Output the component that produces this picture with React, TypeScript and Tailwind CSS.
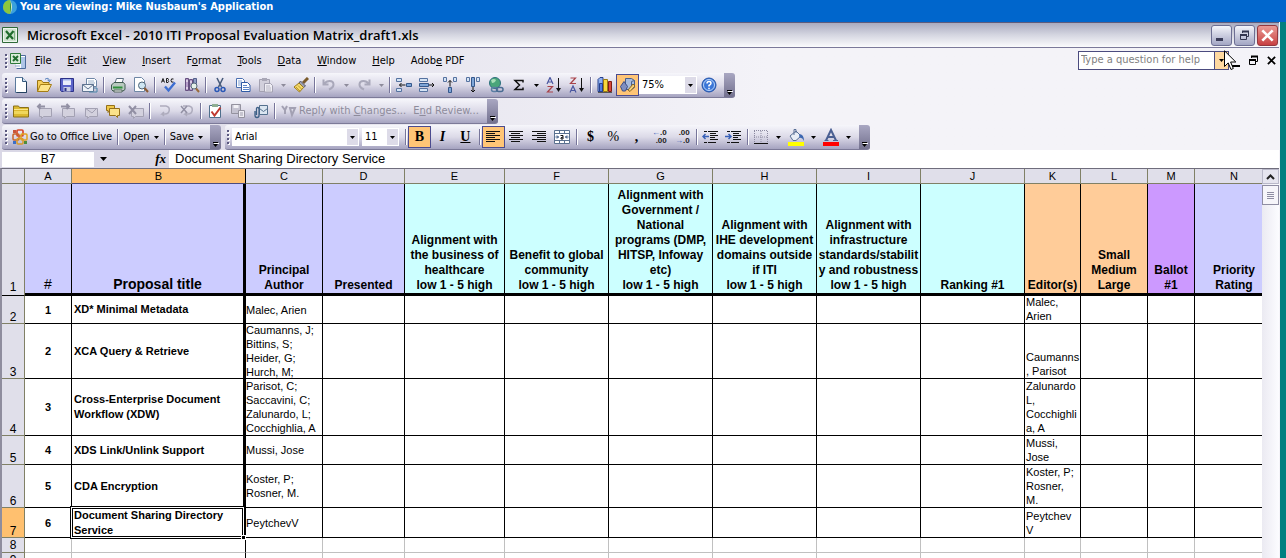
import React from "react";
import type { ReactNode } from "react";

const UI = "font-['DejaVu_Sans_Condensed','DejaVu_Sans',sans-serif]";

/* ---------- icon primitives ---------- */

function Svg({ children, w = 16, h = 16 }: { children: ReactNode; w?: number; h?: number }) {
  return (
    <svg width={w} height={h} viewBox={`0 0 ${w} ${h}`} fill="none" aria-hidden="true" className="shrink-0">
      {children}
    </svg>
  );
}

const page = (
  <>
    <path d="M2.5 .5h7l4 4v11h-11z" fill="#fff" stroke="#5b7a9c" />
    <path d="M9.5 .5v4h4" fill="#cfe0f2" stroke="#35587c" />
    <path d="M13.5 5v10.500h-10" stroke="#23405f" />
  </>
);

const NewIcon = () => <Svg>{page}</Svg>;
const OpenIcon = () => (
  <Svg>
    <path d="M1.500 14.500v-11h4l1.500 2h6v3" fill="#f6cf5c" stroke="#9a7411" />
    <path d="M1.500 14.500l3-7h11l-3.500 7z" fill="#fde48a" stroke="#a57d14" />
    <path d="M9 2.500c2-2 4-1 4.500 1m1.500-1l-1.500 2-2-1.500" stroke="#3f6fb3" />
  </Svg>
);
const SaveIcon = () => (
  <Svg>
    <path d="M1.500 1.500h13v13h-12l-1-1z" fill="#5a63c9" stroke="#2c3288" />
    <path d="M4 2h8v6H4z" fill="#e9edfb" />
    <path d="M4 2h8v1.500H4z" fill="#9fb0e8" />
    <path d="M4.500 10h7v4.500h-7z" fill="#c9cde3" />
    <path d="M5.500 11h2v3h-2z" fill="#2c3288" />
  </Svg>
);
const MailPrintIcon = () => (
  <Svg>
    <path d="M4.500 1.500h8l2 2v6h-10z" fill="#fff" stroke="#6f87a6" />
    <path d="M6 4h6M6 6h7" stroke="#9bb0c9" />
    <path d="M.5 7.500h11v7H.5z" fill="#eef2f8" stroke="#5f7390" />
    <path d="M.5 7.500L6 12l5.500-4.500" stroke="#5f7390" />
    <path d="M12 11h3v4h-8" stroke="#4b86a8" />
  </Svg>
);
const PrintIcon = () => (
  <Svg>
    <path d="M5 6l1.500-4.500h7L12 6z" fill="#fff" stroke="#5d6f83" />
    <path d="M1.500 8l2.500-2.500h9.500l1.500 2v5l-2 1.500H3l-1.500-1.500z" fill="#b8c9bf" stroke="#3f5a50" />
    <path d="M3 10.500h9.500" stroke="#2f8f3c" strokeWidth="2" />
    <path d="M4 13h8v2H4z" fill="#f3f6f4" stroke="#55675f" />
  </Svg>
);
const PreviewIcon = () => (
  <Svg>
    <path d="M1.500 .5h7l3 3v11h-10z" fill="#fff" stroke="#6e87a5" />
    <circle cx="9" cy="8.500" r="3.500" fill="#cfe6f2" stroke="#4d6377" />
    <path d="M11.500 11l3.500 4" stroke="#8a5a32" strokeWidth="2" />
  </Svg>
);
const SpellIcon = () => (
  <Svg>
    <path d="M.5 5.500l1.500-4 1.500 4M1 4h2M5.500 1.500v4h1.500q1.200-1 0-2 1-1 0-2zM12.500 2q-2.500-1-2.500 1.500t2.500 1.500" stroke="#1b1b1b" />
    <path d="M4 9.500l3.500 4L14 5.500" stroke="#3d6ed1" strokeWidth="2.400" />
  </Svg>
);
const ResearchIcon = () => (
  <Svg>
    <path d="M1.500 1.500h3v12h-3zM5.500 2.500h3v11h-3z" fill="#b59cc9" stroke="#665080" />
    <path d="M2 4h2M6 5h2M2 11h2M6 11h2" stroke="#fff" />
    <path d="M9.500 1.500h3v5h-3z" fill="#8f9bc2" stroke="#555f8a" />
    <circle cx="10" cy="9" r="3" fill="#e5f1e8" stroke="#56697a" />
    <path d="M12 11.500l3 3.500" stroke="#9a6a3a" strokeWidth="2" />
  </Svg>
);
const CutIcon = () => (
  <Svg>
    <path d="M5 1l4.500 9M11 1L6.500 10" stroke="#4a5d7c" strokeWidth="1.600" />
    <circle cx="5" cy="12.500" r="2" stroke="#2b58b5" strokeWidth="1.500" />
    <circle cx="11" cy="12.500" r="2" stroke="#2b58b5" strokeWidth="1.500" />
  </Svg>
);
const CopyIcon = () => (
  <Svg>
    <path d="M1.500 1.500h6l2 2v7h-8z" fill="#fff" stroke="#4a6fb0" />
    <path d="M3 4h4M3 6h5M3 8h5" stroke="#7f9fd4" />
    <path d="M6.500 5.500h6l2.500 2.500v6.500H6.500z" fill="#fff" stroke="#2f5aa5" />
    <path d="M8 8.500h4M8 10.500h6M8 12.500h6" stroke="#5b84c8" />
  </Svg>
);
const PasteIcon = () => (
  <Svg>
    <path d="M1.500 2.500h10v12h-10z" fill="#d2d0dc" stroke="#a3a1b1" />
    <path d="M4 1h5v3H4z" fill="#a9a7b6" />
    <path d="M6.500 6.500h6l2 2v6.500h-8z" fill="#efeef4" stroke="#a3a1b1" />
    <path d="M8 9h4M8 11h5M8 13h5" stroke="#b8b6c4" />
  </Svg>
);
const PainterIcon = () => (
  <Svg>
    <path d="M15 1l-5 5" stroke="#7a5a2a" strokeWidth="3" />
    <path d="M7.500 4l5 5-2 1.500-4.500-4.500z" fill="#9fa1ae" stroke="#55576a" />
    <path d="M6 6l4.500 4.500L6.500 15 1 10z" fill="#f5da6a" stroke="#9b7a1c" />
    <path d="M3 10l4 4M5 8.500l3.500 3.500" stroke="#c19a2a" />
  </Svg>
);
const UndoIcon = () => (
  <Svg>
    <path d="M2.500 2.500v5h5M3 7c3-4 9-4 9.500 0 .3 3-2 4.500-4.500 5.500" stroke="#a9a8ba" strokeWidth="2" />
  </Svg>
);
const RedoIcon = () => (
  <Svg>
    <path d="M13.500 2.500v5h-5M13 7c-3-4-9-4-9.500 0-.3 3 2 4.500 4.500 5.500" stroke="#a9a8ba" strokeWidth="2" />
  </Svg>
);
const box = { fill: "#d5e4f5", stroke: "#5572a0" };
const InsertRowIcon = () => (
  <Svg>
    <path d="M.5 1.500h5v3h-5zM.5 11.500h5v3h-5z" {...box} />
    <path d="M10.500 6.500h5v3h-5z" fill="#7fa6d8" stroke="#35588c" />
    <path d="M9.500 8h-6m2-2l-2 2 2 2" stroke="#111" />
  </Svg>
);
const DeleteRowIcon = () => (
  <Svg>
    <path d="M.5 1.500h8v3h-8zM.5 11.500h8v3h-8z" {...box} />
    <path d="M.5 6.500h9v3h-9z" fill="#7fa6d8" stroke="#35588c" />
    <path d="M10 8h5m-2-2l2 2-2 2" stroke="#111" />
  </Svg>
);
const InsertColIcon = () => (
  <Svg>
    <path d="M1.500 .5h3v4h-3zM11.500 .5h3v4h-3z" {...box} />
    <path d="M6.500 10.500h3v5h-3z" fill="#7fa6d8" stroke="#35588c" />
    <path d="M8 9.500v-6m-2 2l2-2 2 2" stroke="#111" />
  </Svg>
);
const DeleteColIcon = () => (
  <Svg>
    <path d="M1.500 .5h3v4h-3zM11.500 .5h3v4h-3z" {...box} />
    <path d="M6.500 .5h3v9h-3z" fill="#7fa6d8" stroke="#35588c" />
    <path d="M8 10v5m-2-2l2 2 2-2" stroke="#111" />
  </Svg>
);
const LinkIcon = () => (
  <Svg>
    <circle cx="7" cy="6" r="5.500" fill="#4aa57a" stroke="#2b6f7d" />
    <path d="M3 3q3-2 5 0-1 3-4 3z" fill="#a9dfb8" />
    <rect x="3.500" y="10.500" width="6" height="4" rx="2" stroke="#5b7ea3" strokeWidth="1.500" />
    <rect x="8.500" y="10.500" width="6.500" height="4" rx="2" stroke="#4a6c92" strokeWidth="1.500" />
  </Svg>
);
const SigmaIcon = () => (
  <Svg>
    <path d="M12 5.500V3.500H4l4.500 4.500L4 12.500h8v-2" stroke="#111" strokeWidth="1.500" />
  </Svg>
);
const SortIcon = ({ desc = false }: { desc?: boolean }) => {
  const a = "M1 7L4 .5 7 7M2 5h4";
  const z = "M1.500 1h5l-5 5.500h5.500";
  return (
    <Svg>
      <path d={desc ? z : a} stroke={desc ? "#a8434a" : "#4a57a0"} strokeWidth="1.200" />
      <g transform="translate(0 8.500)">
        <path d={desc ? a : z} stroke={desc ? "#4a57a0" : "#a8434a"} strokeWidth="1.200" />
      </g>
      <path d="M12.500 1v12" stroke="#111" />
      <path d="M10 11h5l-2.500 4z" fill="#111" />
    </Svg>
  );
};
const ChartIcon = () => (
  <Svg>
    <path d="M1 2.500l2-2h3v14H1z" fill="#8fb0ee" stroke="#27408d" />
    <path d="M2.500 6.500h3v8h-3z" fill="#4f7ce0" stroke="#27408d" />
    <path d="M6.500 2.500h4v12h-4z" fill="#f7d83b" stroke="#9a7a10" />
    <path d="M11.500 4.500h3v10h-3z" fill="#d94a3a" stroke="#7f1c14" />
    <path d="M1 15.500h14" stroke="#555" />
  </Svg>
);
const DrawingIcon = () => (
  <Svg>
    <path d="M5.500 1.500h6l3 2v7l-3 2h-6z" fill="#a7bbdc" stroke="#49608d" />
    <path d="M11.500 4.500l3-1M11.500 4.500v8" stroke="#49608d" />
    <path d="M.5 9.500l3.500-5 3.500 5-2 4.500H2.500z" fill="#7f8fc0" stroke="#3c4d86" />
    <path d="M8 13l5-6 2 2-5 5.500z" fill="#f3d07a" stroke="#8b6620" />
  </Svg>
);
const HelpIcon = () => (
  <Svg>
    <circle cx="8" cy="8" r="7" fill="#3a76d8" stroke="#2353a8" />
    <circle cx="8" cy="8" r="5.500" stroke="#b9d3f7" />
    <path d="M6 6.500q0-2 2-2t2 1.700q0 1.300-2 2.300v1M8 10.800v1.400" stroke="#fff" strokeWidth="1.500" />
  </Svg>
);
const FolderNoteIcon = () => (
  <Svg>
    <path d="M.5 14v-11h5l1 1.500h9v9.500z" fill="#dcb930" stroke="#8a7119" />
    <path d="M1 6.500h14" stroke="#f8e690" />
    <path d="M1 8h14v3H1z" fill="#f0d75c" />
  </Svg>
);
const NoteIcon = ({ dir = 0 }: { dir?: number }) => (
  <Svg>
    <path d="M3.500 5.500h12v8h-8l-2 2v-2h-2z" fill="#d3d1de" stroke="#a3a1b3" />
    {dir === 0 && <path d="M9 3.500H2m2.500-2.500L2 3.500 4.500 6" stroke="#9290a4" strokeWidth="2" />}
    {dir === 1 && <path d="M2 3.500h8M7.500 1L10 3.500 7.500 6" stroke="#9290a4" strokeWidth="2" />}
    {dir === 2 && <path d="M3 5l7 5 5-5" stroke="#a3a1b3" />}
    {dir === 3 && <path d="M1 3l7 8M8 3l-7 8" stroke="#9290a4" strokeWidth="2" />}
  </Svg>
);
const NotesIcon = () => (
  <Svg>
    <path d="M1.500 2.500h8v5h-5l-1.500 2v-2h-1.500z" fill="#f0c94a" stroke="#94701a" />
    <path d="M4.500 5.500h10v7h-2v2l-2-2h-6z" fill="#fbe28a" stroke="#94701a" />
  </Svg>
);
const InkIcon = ({ cross = false }: { cross?: boolean }) => (
  <Svg>
    <path d="M4 3h6c5 1 4 8-1 8H6l2-2M6 11l2 2" stroke="#aeacbd" strokeWidth="1.500" />
    {cross && <path d="M2 3l6 7M8 3l-6 7" stroke="#9290a4" strokeWidth="1.500" />}
  </Svg>
);
const TaskIcon = () => (
  <Svg>
    <path d="M2.500 2.500h11v12h-11z" fill="#fff" stroke="#4f6f8c" />
    <path d="M5 1h6v3H5z" fill="#8fae93" />
    <path d="M4.500 8.500l3 4 6-8" stroke="#c0392f" strokeWidth="2" />
  </Svg>
);
const UpdateIcon = () => (
  <Svg>
    <path d="M1.500 1.500h9v9h-9z" fill="#c5c3d1" stroke="#94929f" />
    <path d="M3.500 2h5v3h-5z" fill="#f2f1f6" />
    <path d="M8.500 7.500h6v7h-6z" fill="#eeedf3" stroke="#94929f" />
    <path d="M10 10h3M10 12h3" stroke="#9f9dac" />
  </Svg>
);
const AttachIcon = () => (
  <Svg>
    <path d="M6.500 2.500h8v9h-8z" fill="#dbe6f1" stroke="#54708e" />
    <path d="M6.500 5.500l4 3 4-3" stroke="#54708e" />
    <path d="M2 8v4.500q0 2 2 2t2-2V6q0-1.500-1.300-1.500T3.500 6v6" stroke="#3c5f86" strokeWidth="1.300" />
  </Svg>
);
const ReplyIcon = () => (
  <Svg>
    <path d="M1 3l3 4 2-4M4 7v4M9 5h5l-3 7z" stroke="#a3a1b3" strokeWidth="2" />
  </Svg>
);
const OfficeIcon = () => (
  <Svg>
    <rect x="5" y="1" width="6" height="6" rx="1" stroke="#d8482c" strokeWidth="1.700" />
    <rect x="1" y="5" width="6" height="6" rx="1" stroke="#c8642a" strokeWidth="1.500" />
    <rect x="9" y="5" width="6" height="6" rx="1" stroke="#e0a320" strokeWidth="1.500" />
    <rect x="5" y="9.500" width="6" height="5.500" rx="1" stroke="#d99a2a" strokeWidth="1.500" />
    <path d="M1 1h3v3H1z" fill="#c9563a" />
    <path d="M12 12h3v3h-3z" fill="#4c8d3f" />
    <path d="M1 12h3v3H1z" fill="#3b6fc9" />
  </Svg>
);
const AlignIcon = ({ kind }: { kind: "l" | "c" | "r" }) => (
  <Svg>
    {[2.5, 4.5, 6.5, 8.5, 10.5, 12.5].map((y, i) => {
      const w = i % 2 ? 9 : 14;
      const x = kind === "l" ? 1 : kind === "r" ? 15 - w : 1 + (14 - w) / 2;
      return <path key={y} d={`M${Math.floor(x)} ${y}h${w}`} stroke="#111" />;
    })}
  </Svg>
);
const MergeIcon = () => (
  <Svg>
    <path d="M.5 1.500h15v13H.5zM.5 4.500h15M.5 11.500h15M5.500 1.500v3M10.500 1.500v3M5.500 11.500v3M10.500 11.500v3" fill="#fff" stroke="#5a718f" />
    <path d="M1.500 8h3m-1.500-1.500L4.500 8 3 9.500M14.500 8h-3M13 6.500L11.500 8 13 9.500" stroke="#2c4a78" />
    <path d="M6.500 6.500h2.500v3.500H7q-1-1.500 2-2" stroke="#111" />
  </Svg>
);
const IndentIcon = ({ out = false }: { out?: boolean }) => (
  <Svg>
    <path d="M6 2.500h10M8 4.500h6M8 6.500h8M8 8.500h5M8 10.500h8M6 13.500h8M2 2.500h3M2 13.500h3" stroke="#111" />
    <path d={out ? "M7 7.500H1m2.500-2.500L1 7.500 3.500 10" : "M0 7.500h6M3.500 5L6 7.500 3.500 10"} stroke="#3a62b8" strokeWidth="1.500" />
  </Svg>
);
const BordersIcon = () => (
  <Svg>
    <path d="M1.500 2v12M8 2v12M14.500 2v12M1 1.500h14M1 8h14" stroke="#8c8aa0" strokeDasharray="1 1" />
    <path d="M1 14.500h14" stroke="#111" />
  </Svg>
);
const FillIcon = () => (
  <Svg w={18} h={18}>
    <path d="M3 8l6-5 5 5-5 4.500H6z" fill="#e8edf6" stroke="#586f95" />
    <path d="M7 7V1.500h2V5" stroke="#586f95" />
    <path d="M12 6q5 0 5 7-2-4-4.500-3z" fill="#3d67b1" />
    <path d="M1 14h16v4H1z" fill="#ff0" />
  </Svg>
);
const FontColorIcon = () => (
  <Svg w={18} h={18}>
    <path d="M4 12.500L9 2l5 10.500M6 9h6" stroke="#4a5f92" strokeWidth="2" />
    <path d="M2.500 12.500h4M11 12.500h5" stroke="#4a5f92" />
    <path d="M1 14h16v4H1z" fill="#f00" />
  </Svg>
);
const ExcelIcon = () => (
  <Svg w={18} h={18}>
    <path d="M1.500 1.500h15v15h-15z" fill="#eef5ee" stroke="#2f6b38" />
    <path d="M3 3h12v12H3z" fill="#cfe3cf" />
    <path d="M5 5l7 8M12.500 5l-7 8" stroke="#1f6b2c" strokeWidth="2.200" />
    <path d="M13.500 5v9" stroke="#7fae84" />
  </Svg>
);
const WorkbookIcon = () => (
  <Svg w={18} h={18}>
    <path d="M5.500 3.500h11v13h-9" fill="#fff" stroke="#4b6a9c" />
    <path d="M13 5v11M15 5v11" stroke="#5f8cd0" />
    <path d="M1.500 1.500h10v10h-10z" fill="#d9ecd9" stroke="#2f7a3a" />
    <path d="M4 4l5 5M9 4L4 9" stroke="#1f6b2c" strokeWidth="2" />
    <path d="M6 14h5" stroke="#8fa6c9" />
  </Svg>
);

/* ---------- toolbar parts ---------- */

const Tri = ({ dim = false }: { dim?: boolean }) => (
  <svg width="5" height="3" viewBox="0 0 5 3" aria-hidden="true">
    <path d="M0 0h5L2.500 3z" fill={dim ? "#8d8b9b" : "#000"} />
  </svg>
);

function Tool({ label, active = false, children }: { label: string; active?: boolean; children: ReactNode }) {
  return (
    <button
      type="button"
      aria-label={label}
      className={
        active
          ? "flex h-[22px] w-[23px] shrink-0 items-center justify-center border border-[#4b4b8f] bg-[#ffc576]"
          : "flex h-[22px] w-[23px] shrink-0 items-center justify-center"
      }
    >
      {children}
    </button>
  );
}

const Drop = ({ label, dim = false }: { label: string; dim?: boolean }) => (
  <button type="button" aria-label={label} className="flex h-[22px] w-3 shrink-0 items-center justify-center">
    <Tri dim={dim} />
  </button>
);

const Sep = () => <span className="mx-[2px] h-4 w-px shrink-0 bg-[#77759a] shadow-[1px_0_0_#fff]" />;

const Grip = () => (
  <span className="flex w-[7px] shrink-0 flex-col items-center gap-[2px]">
    {[0, 1, 2, 3].map((i) => (
      <span key={i} className="size-[2px] bg-[#5b5980] shadow-[1px_1px_0_#fff]" />
    ))}
  </span>
);

function Bar({ label, children }: { label: string; children: ReactNode }) {
  return (
    <div
      role="toolbar"
      aria-label={label}
      className="flex h-[25px] shrink-0 items-center overflow-hidden rounded-[3px] border-b border-[#7c7a98] bg-linear-to-b from-[#f6f6fb] via-[#dcdae8] to-[#a5a3c0]"
    >
      <Grip />
      {children}
      <button
        type="button"
        aria-label={`${label} options`}
        className="ml-1 flex h-full w-[11px] shrink-0 flex-col items-center justify-end gap-px bg-linear-to-b from-[#a9a7c2] to-[#74728f] pb-[2px]"
      >
        <span className="h-px w-[5px] bg-black shadow-[1px_1px_0_#fff]" />
        <Tri />
      </button>
    </div>
  );
}

function Combo({ label, value, size }: { label: string; value: string; size: string }) {
  return (
    <span className={`relative flex h-[18px] shrink-0 bg-white ${size}`}>
      <select aria-label={label} className="w-full appearance-none bg-transparent pl-[3px] text-[11px] leading-[18px] outline-none">
        <option>{value}</option>
      </select>
      <span className="pointer-events-none absolute inset-y-px right-px flex w-[11px] items-center justify-center bg-[#dddbe8]">
        <Tri />
      </span>
    </span>
  );
}

const Glyph = ({ children }: { children: ReactNode }) => (
  <span className="font-['Liberation_Serif',serif] text-[14px] leading-none font-bold">{children}</span>
);

const Decimal = ({ more = false }: { more?: boolean }) => (
  <span className="flex flex-col font-['Liberation_Sans',sans-serif] text-[8px] leading-[8px] font-bold text-[#222]">
    <span className="text-right">
      {more && <span className="text-[#3a62b8]">←</span>}
      {more ? ".0" : ".00"}
    </span>
    <span className="text-right">
      {!more && <span className="text-[#3a62b8]">→</span>}
      {more ? ".00" : ".0"}
    </span>
  </span>
);

/* ---------- sheet data ---------- */

const columns = [
  { id: "A", w: "w-[47px]", bg: "bg-[#ccccff]", title: ["#"], big: "text-[14px] font-normal" },
  { id: "B", w: "w-[174px]", bg: "bg-[#ccccff]", title: ["Proposal title"], big: "text-[14px] font-bold" },
  { id: "C", w: "w-[77px]", bg: "bg-[#ccccff]", title: ["Principal", "Author"] },
  { id: "D", w: "w-[82px]", bg: "bg-[#ccccff]", title: ["Presented"] },
  { id: "E", w: "w-[100px]", bg: "bg-[#ccffff]", title: ["Alignment with", "the business of", "healthcare", "low 1 - 5 high"] },
  { id: "F", w: "w-[104px]", bg: "bg-[#ccffff]", title: ["Benefit to global", "community", "low 1 - 5 high"] },
  {
    id: "G",
    w: "w-[104px]",
    bg: "bg-[#ccffff]",
    title: ["Alignment with", "Government /", "National", "programs (DMP,", "HITSP, Infoway", "etc)", "low 1 - 5 high"],
  },
  { id: "H", w: "w-[104px]", bg: "bg-[#ccffff]", title: ["Alignment with", "IHE development", "domains outside", "if ITI", "low 1 - 5 high"] },
  { id: "I", w: "w-[104px]", bg: "bg-[#ccffff]", title: ["Alignment with", "infrastructure", "standards/stabilit", "y and robustness", "low 1 - 5 high"] },
  { id: "J", w: "w-[104px]", bg: "bg-[#ccffff]", title: ["Ranking #1"] },
  { id: "K", w: "w-[56px]", bg: "bg-[#ffcc99]", title: ["Editor(s)"] },
  { id: "L", w: "w-[67px]", bg: "bg-[#ffcc99]", title: ["Small", "Medium", "Large"] },
  { id: "M", w: "w-[47px]", bg: "bg-[#cc99ff]", title: ["Ballot", "#1"] },
  { id: "N", w: "", bg: "bg-[#ccccff]", title: ["Priority", "Rating"] },
];

const rows = [
  { n: 2, h: "h-[27px]", title: ["XD* Minimal Metadata"], author: ["Malec, Arien"], editor: ["Malec,", "Arien"] },
  { n: 3, h: "h-[54px]", title: ["XCA Query & Retrieve"], author: ["Caumanns, J;", "Bittins, S;", "Heider, G;", "Hurch, M;"], editor: ["Caumanns", ", Parisot"] },
  {
    n: 4,
    h: "h-[56px]",
    title: ["Cross-Enterprise Document", "Workflow (XDW)"],
    author: ["Parisot, C;", "Saccavini, C;", "Zalunardo, L;", "Cocchighlia, A"],
    editor: ["Zalunardo", "L,", "Cocchighli", "a, A"],
  },
  { n: 5, h: "h-[28px]", title: ["XDS Link/Unlink Support"], author: ["Mussi, Jose"], editor: ["Mussi,", "Jose"] },
  { n: 6, h: "h-[42px]", title: ["CDA Encryption"], author: ["Koster, P;", "Rosner, M."], editor: ["Koster, P;", "Rosner,", "M."] },
  { n: 7, h: "h-[29px]", title: ["Document Sharing Directory", "Service"], author: ["PeytchevV"], editor: ["Peytchev", "V"] },
];

const Lines = ({ text }: { text: string[] }) => (
  <div className="whitespace-nowrap">
    {text.map((t) => (
      <div key={t}>{t}</div>
    ))}
  </div>
);

function Sheet() {
  return (
    <table className="w-full min-w-[1272px] table-fixed border-separate border-spacing-0 bg-white font-['Liberation_Sans',Arial,sans-serif] text-[11px] leading-[14px] text-black">
      <colgroup>
        <col className="w-[23px]" />
        {columns.map((c) => (
          <col key={c.id} className={c.w} />
        ))}
      </colgroup>
      <thead>
        <tr>
          <th aria-label="Select all" className="border-r border-b border-[#808066] bg-[#e0dfea] p-0" />
          {columns.map((c) => (
            <th
              key={c.id}
              scope="col"
              className={
                c.id === "B"
                  ? "border-r border-b border-r-black border-b-[#4b4b7f] bg-[#ffc06f] p-0 font-normal"
                  : "border-r border-b border-[#808066] bg-[#e0dfea] p-0 font-normal"
              }
            >
              {c.id}
            </th>
          ))}
        </tr>
      </thead>
      <tbody>
        <tr>
          <th scope="row" className="border-r border-b border-r-[#808066] border-b-black bg-[#e0dfea] p-0 align-bottom text-[12px] leading-[15px] font-normal">
            1
          </th>
          {columns.map((c) => (
            <td
              key={c.id}
              className={`border-b-3 border-black p-0 align-bottom text-center ${c.id === "B" ? "border-r-3" : "border-r"} ${c.bg} ${c.big ?? "text-[12px] font-bold"}`}
            >
              <div className={`flex h-[109px] items-end justify-center overflow-hidden ${c.big ? "leading-[17px]" : "leading-[15px]"}`}>
                <Lines text={c.title} />
              </div>
            </td>
          ))}
        </tr>
        {rows.map((r, i) => (
          <tr key={r.n}>
            <th
              scope="row"
              className={`border-r border-b border-[#808066] p-0 align-bottom text-[12px] leading-[12px] font-normal ${r.n === 7 ? "bg-[#ffc06f]" : "bg-[#e0dfea]"}`}
            >
              {r.n}
            </th>
            {columns.map((c) => (
              <td key={c.id} className={`relative border-b border-black p-0 ${c.id === "B" ? "border-r-3" : "border-r"}`}>
                {c.id === "A" && <div className={`flex items-center justify-center font-bold ${r.h}`}>{i + 1}</div>}
                {c.id === "B" && (
                  <div className={`flex items-center overflow-hidden pl-[2px] leading-[15px] font-bold ${r.h}`}>
                    <Lines text={r.title} />
                  </div>
                )}
                {c.id === "C" && (
                  <div className={`flex items-center overflow-hidden ${r.h}`}>
                    <Lines text={r.author} />
                  </div>
                )}
                {c.id === "K" && (
                  <div className={`flex items-end overflow-hidden pl-[1px] ${r.h}`}>
                    <Lines text={r.editor} />
                  </div>
                )}
                {c.id === "B" && r.n === 7 && (
                  <>
                    <span className="absolute -inset-x-[2px] -inset-y-[2px] border border-black outline outline-offset-[-2px] outline-white" />
                    <span className="absolute inset-0 border border-black" />
                    <span className="absolute -right-[3px] -bottom-[3px] size-[5px] border border-white bg-black" />
                  </>
                )}
              </td>
            ))}
          </tr>
        ))}
        {[8, 9].map((n) => (
          <tr key={n}>
            <th scope="row" className="border-r border-b border-[#808066] bg-[#e0dfea] p-0 text-[12px] leading-[14px] font-normal">
              {n}
            </th>
            {columns.map((c) => (
              <td key={c.id} className={`border-r border-b border-b-[#c0c0c0] p-0 ${c.id === "B" ? "border-r-black" : "border-r-[#c0c0c0]"}`} />
            ))}
          </tr>
        ))}
      </tbody>
    </table>
  );
}

/* ---------- window ---------- */

const menus = ["File", "Edit", "View", "Insert", "Format", "Tools", "Data", "Window", "Help", "Adobe PDF"];
const hot: Record<string, number> = { Format: 1, "Adobe PDF": 4 };

const Mnemonic = ({ text, at = 0 }: { text: string; at?: number }) => (
  <>
    {text.slice(0, at)}
    <span className="underline underline-offset-1">{text[at]}</span>
    {text.slice(at + 1)}
  </>
);

const RestoreGlyph = ({ color }: { color: string }) => (
  <svg width="11" height="11" viewBox="0 0 11 11" fill="none" aria-hidden="true">
    <path d="M3.500 3V1.500h6v5H8" stroke={color} />
    <path d="M3 1.500h7" stroke={color} strokeWidth="2" />
    <path d="M1.500 5h6v4.500h-6z" stroke={color} />
    <path d="M1 5h7" stroke={color} strokeWidth="2" />
  </svg>
);
const CloseGlyph = ({ color, s }: { color: string; s: number }) => (
  <svg width={s} height={s} viewBox="0 0 10 10" fill="none" aria-hidden="true">
    <path d="M1 1l8 8M9 1L1 9" stroke={color} strokeWidth="2" />
  </svg>
);

export default function App() {
  return (
    <div className={`flex h-screen flex-col overflow-hidden bg-[#008080] text-[11px] text-black ${UI}`}>
      <header className="flex h-[22px] shrink-0 items-start bg-[#0066cc] pl-[3px] text-white">
        <svg width="15" height="15" viewBox="0 0 15 15" aria-hidden="true">
          <circle cx="7" cy="7" r="7" fill="#3aa0dc" />
          <path d="M7 0a7 7 0 0 0 0 14z" fill="#8cc63f" />
          <path d="M7 0q4 7 0 14" fill="#d9f0c0" />
          <path d="M7 0q2 7 0 14" fill="#2f8a3a" />
        </svg>
        <h1 className="pl-[2px] text-[11px] leading-[14px] font-bold">You are viewing: Mike Nusbaum's Application</h1>
      </header>

      <div className="relative mr-[6px] flex min-h-0 flex-1 flex-col border-r border-[#f4f3f8] bg-[#f4f3f8]">
        <div className="flex h-[26px] shrink-0 items-center gap-2 border-t border-b border-t-[#5d5b7c] border-b-[#7b799a] bg-linear-to-b from-[#a9abbf] via-[#d5d6e1] to-[#fbfbfd] pr-px pl-px">
          <ExcelIcon />
          <h2 className="flex-1 truncate font-['Open_Sans','Noto_Sans',sans-serif] text-[13px] leading-[22px] font-semibold">
            Microsoft Excel - 2010 ITI Proposal Evaluation Matrix_draft1.xls
          </h2>
          <div className="flex gap-[2px]">
            <button type="button" aria-label="Minimize" className="flex size-[21px] items-end justify-start rounded-[3px] border border-[#6d6f93] bg-linear-to-b from-[#f4f5fa] to-[#a3a6c4] p-1">
              <span className="h-[3px] w-[7px] bg-[#3a3c58]" />
            </button>
            <button type="button" aria-label="Restore" className="flex size-[21px] items-center justify-center rounded-[3px] border border-[#6d6f93] bg-linear-to-b from-[#f4f5fa] to-[#a3a6c4]">
              <RestoreGlyph color="#33354f" />
            </button>
            <button type="button" aria-label="Close" className="flex size-[21px] items-center justify-center rounded-[3px] border border-[#93383f] bg-linear-to-b from-[#e99a96] to-[#c73e42]">
              <CloseGlyph color="#fff" s={13} />
            </button>
          </div>
        </div>

        <div className="shrink-0 bg-linear-to-r from-[#dad8e6] to-[#f4f3f8] to-60%">
          <div className="flex h-[25px] items-center pl-[2px]">
            <Grip />
            <WorkbookIcon />
            <nav aria-label="Menu" className="flex flex-1">
              {menus.map((m) => (
                <button key={m} type="button" className="px-2 leading-[22px]">
                  <Mnemonic text={m} at={hot[m] ?? 0} />
                </button>
              ))}
            </nav>
            <div className="flex h-[19px] w-[151px] border border-[#4b4b7f] bg-white">
              <input
                aria-label="Type a question for help"
                placeholder="Type a question for help"
                className="min-w-0 flex-1 pl-[2px] outline-none placeholder:text-[#7f7f7f]"
              />
              <button type="button" aria-label="Recent questions" className="flex w-[14px] items-center justify-center border-l border-[#4b4b7f] bg-[#ffd9a0]">
                <Tri />
              </button>
            </div>
            <div className="flex items-center gap-2 pr-[3px] pl-[3px]">
              <button type="button" aria-label="Minimize workbook" className="flex h-3 w-2 items-end">
                <span className="h-[2px] w-2 bg-black" />
              </button>
              <button type="button" aria-label="Restore workbook">
                <RestoreGlyph color="#000" />
              </button>
              <button type="button" aria-label="Close workbook">
                <CloseGlyph color="#000" s={9} />
              </button>
            </div>
          </div>

          <div className="flex flex-col items-start gap-px pl-[2px]">
            <Bar label="Standard">
              <Tool label="New"><NewIcon /></Tool>
              <Tool label="Open"><OpenIcon /></Tool>
              <Tool label="Save"><SaveIcon /></Tool>
              <Tool label="Permission"><MailPrintIcon /></Tool>
              <Sep />
              <Tool label="Print"><PrintIcon /></Tool>
              <Tool label="Print preview"><PreviewIcon /></Tool>
              <Sep />
              <Tool label="Spelling"><SpellIcon /></Tool>
              <Tool label="Research"><ResearchIcon /></Tool>
              <Sep />
              <Tool label="Cut"><CutIcon /></Tool>
              <Tool label="Copy"><CopyIcon /></Tool>
              <Tool label="Paste"><PasteIcon /></Tool>
              <Drop label="Paste options" dim />
              <Tool label="Format painter"><PainterIcon /></Tool>
              <Sep />
              <Tool label="Undo"><UndoIcon /></Tool>
              <Drop label="Undo list" dim />
              <Tool label="Redo"><RedoIcon /></Tool>
              <Drop label="Redo list" dim />
              <Sep />
              <Tool label="Insert rows"><InsertRowIcon /></Tool>
              <Tool label="Delete rows"><DeleteRowIcon /></Tool>
              <Tool label="Insert columns"><InsertColIcon /></Tool>
              <Tool label="Delete columns"><DeleteColIcon /></Tool>
              <Tool label="Hyperlink"><LinkIcon /></Tool>
              <Tool label="AutoSum"><SigmaIcon /></Tool>
              <Drop label="AutoSum list" />
              <Tool label="Sort ascending"><SortIcon /></Tool>
              <Tool label="Sort descending"><SortIcon desc /></Tool>
              <Sep />
              <Tool label="Chart"><ChartIcon /></Tool>
              <Tool label="Drawing" active><DrawingIcon /></Tool>
              <Combo label="Zoom" value="75%" size="w-[58px]" />
              <Tool label="Help"><HelpIcon /></Tool>
            </Bar>

            <Bar label="Reviewing">
              <Tool label="Edit comment"><FolderNoteIcon /></Tool>
              <Tool label="Previous comment"><NoteIcon dir={0} /></Tool>
              <Tool label="Next comment"><NoteIcon dir={1} /></Tool>
              <Tool label="Show comment"><NoteIcon dir={2} /></Tool>
              <Tool label="Show all comments"><NotesIcon /></Tool>
              <Tool label="Delete comment"><NoteIcon dir={3} /></Tool>
              <Sep />
              <Tool label="Show ink"><InkIcon /></Tool>
              <Tool label="Delete ink"><InkIcon cross /></Tool>
              <Sep />
              <Tool label="Create task"><TaskIcon /></Tool>
              <Tool label="Update file"><UpdateIcon /></Tool>
              <Tool label="Send as attachment"><AttachIcon /></Tool>
              <Sep />
              <button type="button" className="flex items-center gap-[2px] pl-1 text-[#8d8b9b]">
                <ReplyIcon />
                <span><Mnemonic text="Reply with Changes..." at={11} /></span>
              </button>
              <button type="button" className="pr-1 pl-[7px] text-[#8d8b9b]">
                <Mnemonic text="End Review..." at={1} />
              </button>
            </Bar>

            <div className="flex gap-1">
              <Bar label="Office Live">
                <button type="button" className="flex items-center gap-[2px] px-[3px]">
                  <OfficeIcon />
                  Go to Office Live
                </button>
                <Sep />
                <button type="button" className="flex items-center gap-1 px-[3px]">
                  Open <Tri />
                </button>
                <Sep />
                <button type="button" className="flex items-center gap-1 px-[3px]">
                  Save <Tri />
                </button>
              </Bar>
              <Bar label="Formatting">
                <Combo label="Font" value="Arial" size="w-[127px]" />
                <span className="w-[3px]" />
                <Combo label="Font size" value="11" size="w-[37px]" />
                <span className="w-1" />
                <Sep />
                <Tool label="Bold" active><Glyph>B</Glyph></Tool>
                <Tool label="Italic"><Glyph><i>I</i></Glyph></Tool>
                <Tool label="Underline"><Glyph><span className="underline">U</span></Glyph></Tool>
                <Sep />
                <Tool label="Align left" active><AlignIcon kind="l" /></Tool>
                <Tool label="Center"><AlignIcon kind="c" /></Tool>
                <Tool label="Align right"><AlignIcon kind="r" /></Tool>
                <Tool label="Merge and center"><MergeIcon /></Tool>
                <Sep />
                <Tool label="Currency"><Glyph>$</Glyph></Tool>
                <Tool label="Percent"><span className="font-['Liberation_Serif',serif] text-[14px] leading-none">%</span></Tool>
                <Tool label="Comma style"><Glyph>,</Glyph></Tool>
                <Tool label="Increase decimal"><Decimal more /></Tool>
                <Tool label="Decrease decimal"><Decimal /></Tool>
                <Sep />
                <Tool label="Decrease indent"><IndentIcon out /></Tool>
                <Tool label="Increase indent"><IndentIcon /></Tool>
                <Sep />
                <Tool label="Borders"><BordersIcon /></Tool>
                <Drop label="Border styles" />
                <Tool label="Fill color"><FillIcon /></Tool>
                <Drop label="Fill colors" />
                <Tool label="Font color"><FontColorIcon /></Tool>
                <Drop label="Font colors" />
              </Bar>
            </div>
          </div>
        </div>

        <div className="flex h-[18px] shrink-0 items-center bg-[#dad8e6] pl-[2px] font-['Liberation_Sans',Arial,sans-serif]">
          <input aria-label="Name box" defaultValue="B7" className="h-[15px] w-[92px] bg-white text-center text-[12px] outline-none" />
          <span className="flex w-[75px] items-center justify-between pr-[3px] pl-[5px]">
            <button type="button" aria-label="Name list" className="p-px">
              <svg width="7" height="4" viewBox="0 0 7 4" aria-hidden="true">
                <path d="M0 0h7L3.500 4z" fill="#000" />
              </svg>
            </button>
            <i className="font-['Liberation_Serif',serif] text-[13px] leading-[16px] font-bold">fx</i>
          </span>
          <input
            aria-label="Formula"
            defaultValue="Document Sharing Directory Service"
            className="h-[18px] min-w-0 flex-1 bg-white pl-[6px] text-[13px] outline-none"
          />
        </div>

        <div className="flex min-h-0 flex-1 border-t border-l-2 border-t-[#6f6d7c] border-l-[#8f8d9e]">
          <main className="min-w-0 flex-1 overflow-hidden">
            <Sheet />
          </main>
          <div className="flex w-[17px] shrink-0 flex-col bg-linear-to-r from-[#ebeaf2] to-[#fcfcff]">
            <button type="button" aria-label="Scroll up" className="flex h-[15px] items-center justify-center border border-[#b9b8c9] bg-[#e6e5ef]">
              <svg width="9" height="6" viewBox="0 0 9 6" fill="none" aria-hidden="true">
                <path d="M1 5l3.500-3.500L8 5" stroke="#222" strokeWidth="2" />
              </svg>
            </button>
            <div className="mt-px flex h-[20px] flex-col items-center justify-center gap-px border border-[#8f8da3] bg-[#f6f5fa]">
              <span className="h-px w-[7px] bg-[#8f8da3]" />
              <span className="h-px w-[7px] bg-[#8f8da3]" />
              <span className="h-px w-[7px] bg-[#8f8da3]" />
              <span className="h-px w-[7px] bg-[#8f8da3]" />
            </div>
          </div>
        </div>

        <svg width="13" height="22" viewBox="0 0 13 22" aria-hidden="true" className="pointer-events-none absolute top-[28px] right-[42px]">
          <path d="M.5 .8v15.700l3.700-3.600 2.800 6.600 2.300-1-2.700-6.500h5.200z" fill="#fff" stroke="#000" />
        </svg>
      </div>
    </div>
  );
}
